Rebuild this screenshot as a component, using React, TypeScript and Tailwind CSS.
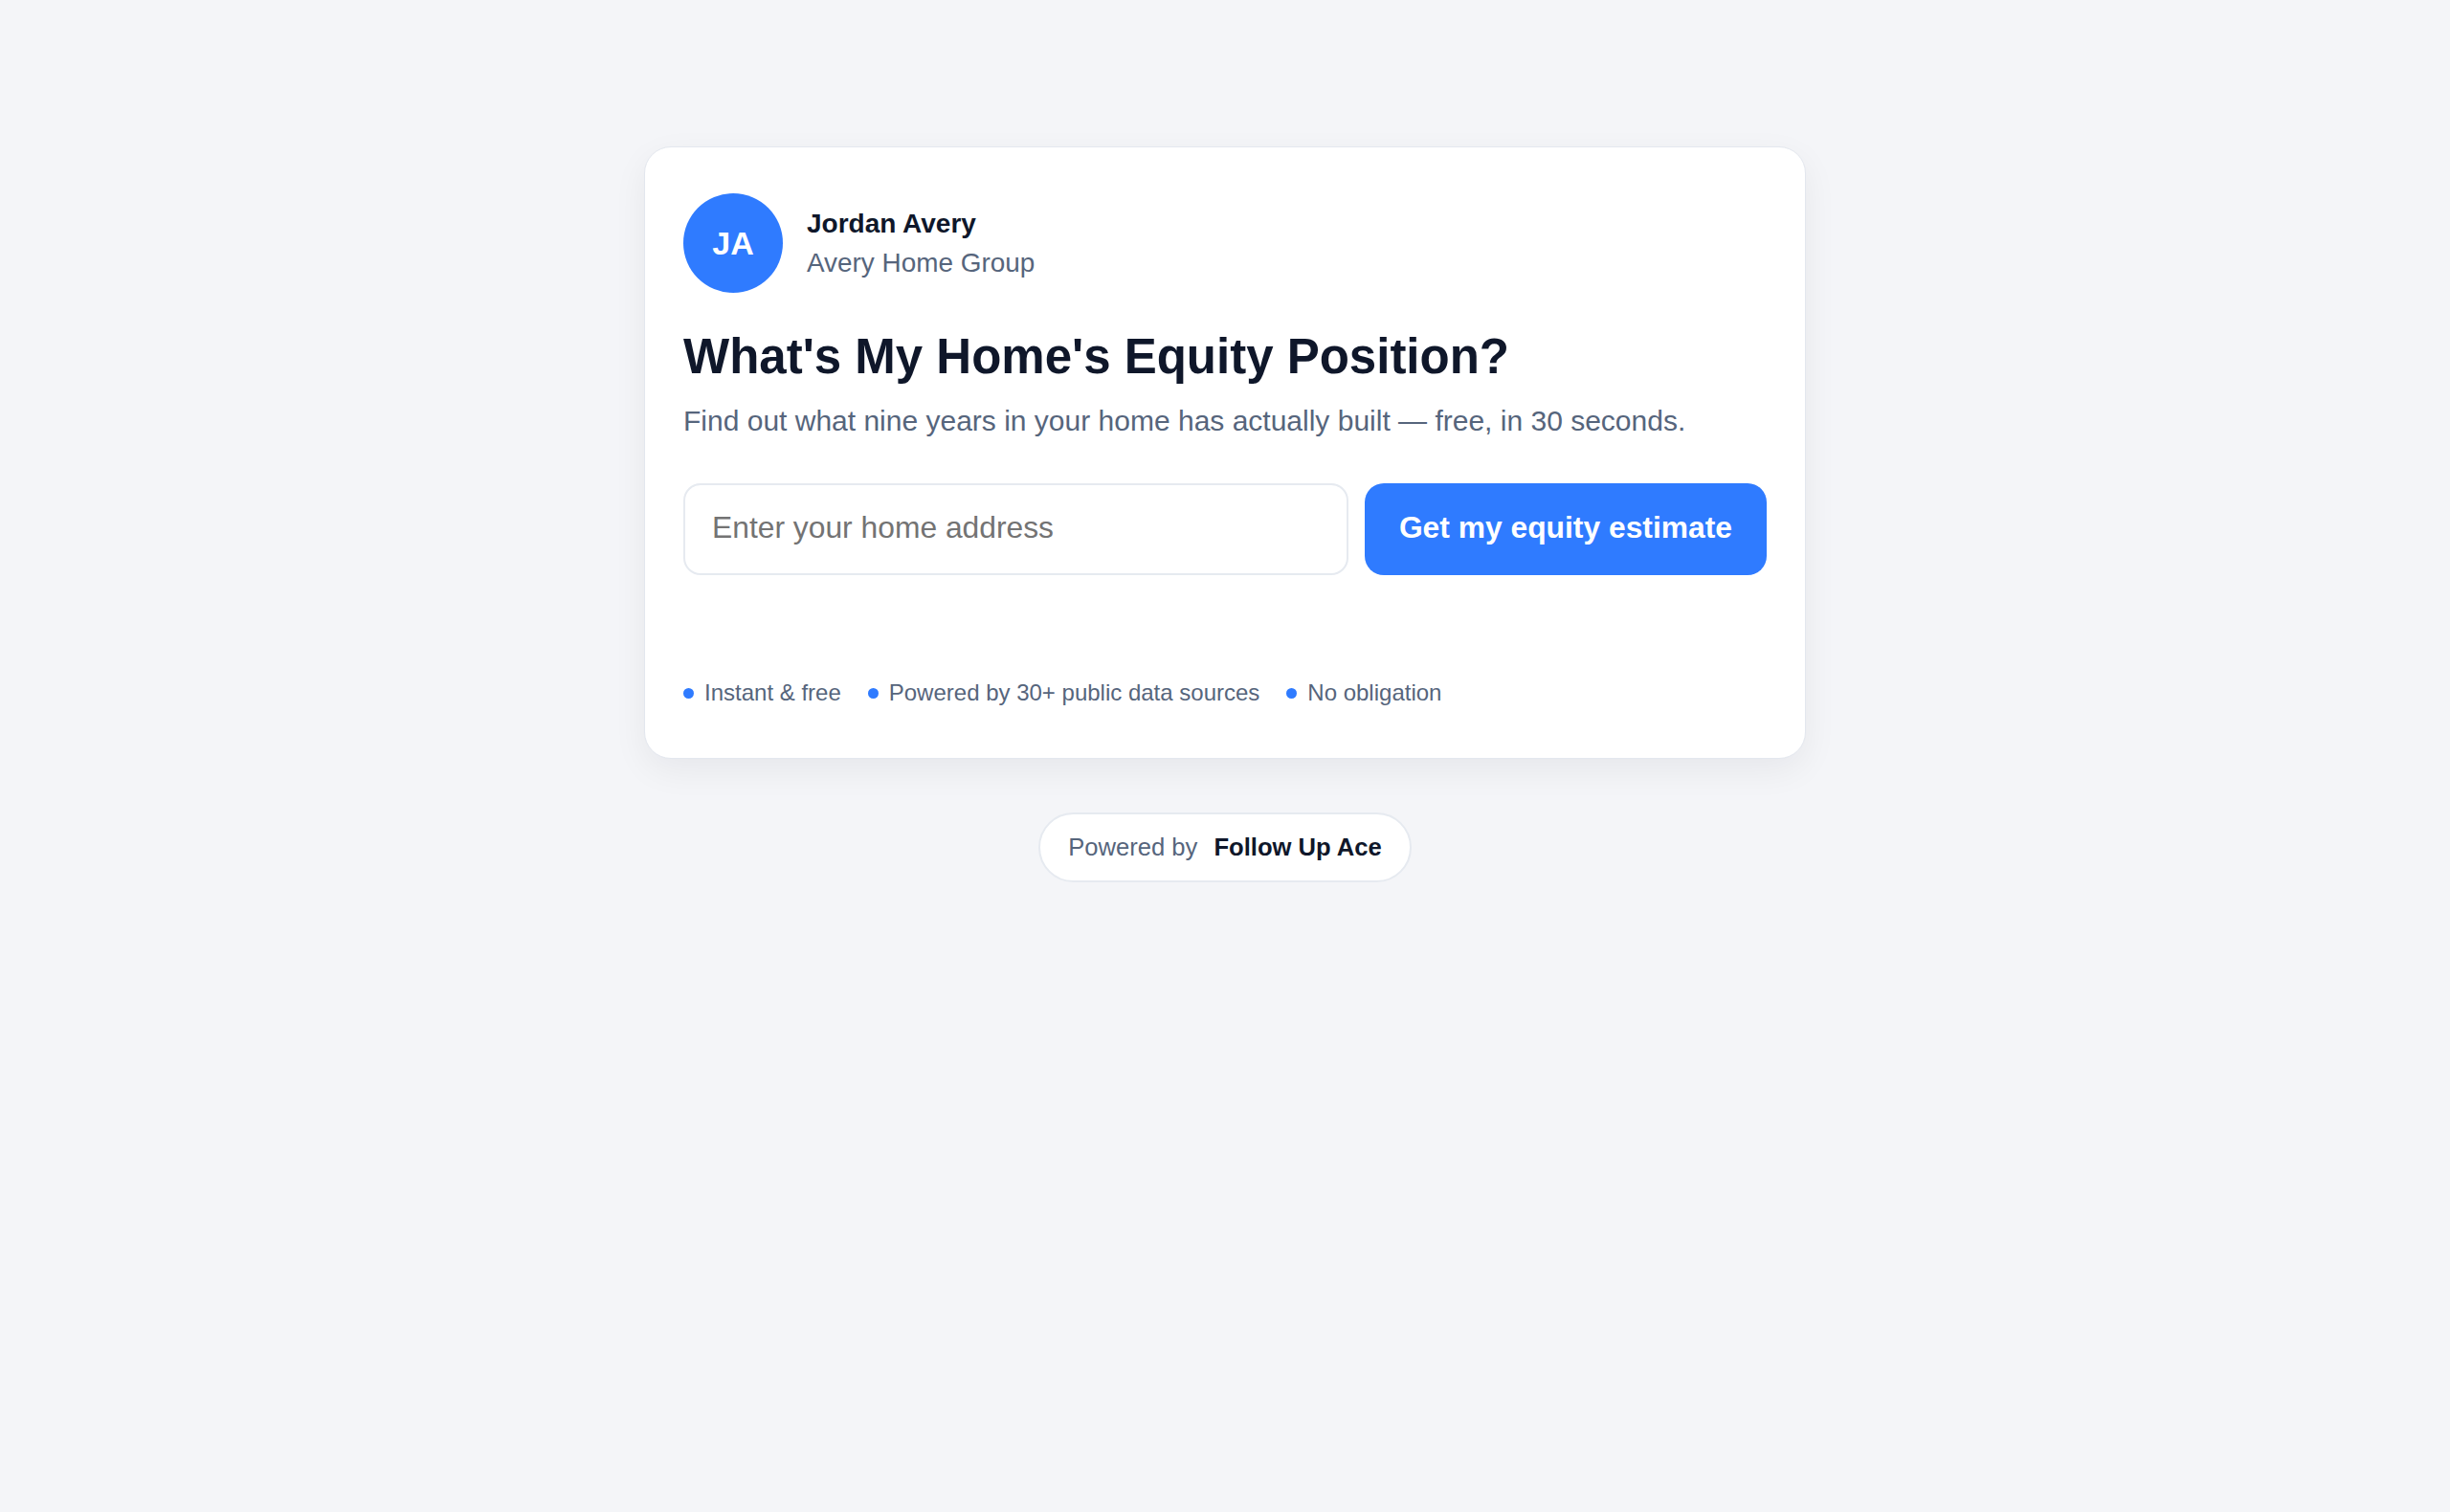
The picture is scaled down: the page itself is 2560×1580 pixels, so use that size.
import React from "react";

export default function App() {
  const bullets = ["Instant & free", "Powered by 30+ public data sources", "No obligation"];
  return (
    <div
      className="min-h-screen w-full bg-[#f4f5f8] flex flex-col items-center pt-[153px]"
      style={{ fontFamily: '"Liberation Sans", Arial, sans-serif' }}
    >
      <div className="w-[1214px] rounded-[28px] border border-[#e3e7ee] bg-white px-[40px] pt-[48px] pb-[50px] shadow-[0_12px_36px_rgba(15,23,42,0.06)]">
        <div className="flex items-center gap-[25px]">
          <div className="flex h-[104px] w-[104px] items-center justify-center rounded-full bg-[#2f7bff] text-[34px] font-bold text-white">
            JA
          </div>
          <div className="flex flex-col gap-[5px]">
            <div className="text-[28px] leading-[36px] font-bold text-[#0f172a]">Jordan Avery</div>
            <div className="text-[27.9px] leading-[36px] text-[#56657c]">Avery Home Group</div>
          </div>
        </div>
        <h1 className="mt-[36px] text-[51px] leading-[61px] font-bold text-[#0f172a]">
          What's My Home's Equity Position?
        </h1>
        <p className="mt-[14px] text-[30px] leading-[45px] text-[#56657c]">
          Find out what nine years in your home has actually built — free, in 30 seconds.
        </p>
        <div className="mt-[43px] flex h-[96px] gap-[17px]">
          <input
            type="text"
            placeholder="Enter your home address"
            className="min-w-0 flex-1 rounded-[18px] border-2 border-[#e6eaf0] bg-white px-[28px] pb-[3px] text-[31.8px] text-[#0f172a] outline-none placeholder:text-[#737373]"
            style={{ fontFamily: '"Liberation Sans", Arial, sans-serif' }}
          />
          <button
            className="rounded-[20px] bg-[#2f7bff] px-[36px] pb-[3px] text-[31.8px] font-bold text-white"
            style={{ fontFamily: '"Liberation Sans", Arial, sans-serif' }}
          >
            Get my equity estimate
          </button>
        </div>
        <ul className="mt-[105px] flex items-center gap-[28px] text-[24px] leading-[36px] text-[#56657c]">
          {bullets.map((b) => (
            <li key={b} className="flex items-center gap-[11px]">
              <span className="h-[11px] w-[11px] rounded-full bg-[#2f7bff]" />
              <span>{b}</span>
            </li>
          ))}
        </ul>
      </div>
      <div className="mt-[56px] flex h-[73px] items-center gap-[17px] rounded-full border-2 border-[#e6eaf0] bg-white px-[29px] text-[25.6px]">
        <span className="text-[#56657c]">Powered by</span>
        <span className="font-bold text-[#0f172a]">Follow Up Ace</span>
      </div>
    </div>
  );
}
